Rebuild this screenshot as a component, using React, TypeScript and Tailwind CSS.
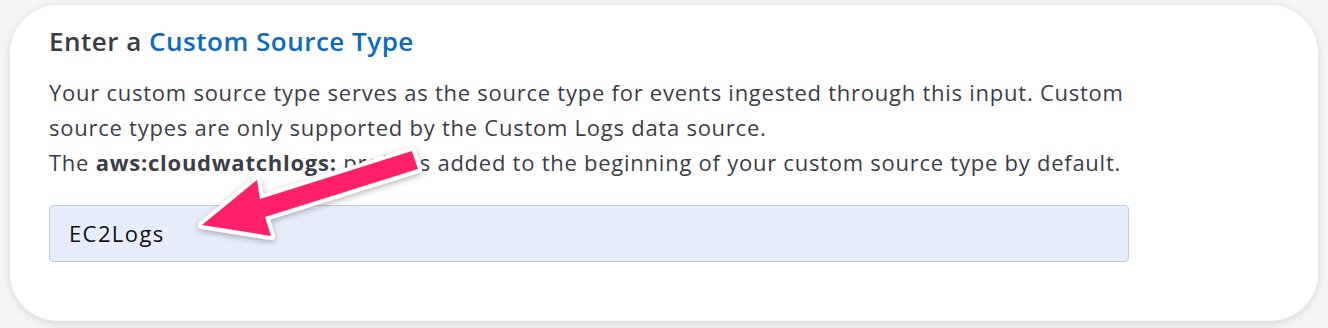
import React from "react";

export default function App() {
  return (
    <div className="w-[1328px] h-[328px] bg-[#f4f4f6] pt-[5px] px-[10px] overflow-hidden" style={{ fontFamily: "'Open Sans', Lato, sans-serif" }}>
      <div className="relative h-[316px] rounded-[48px] bg-white shadow-[0_2px_8px_rgba(0,0,0,0.12)] pl-[39px] pr-[150px] pt-[18px]">
        <h2 className="text-[26px] leading-[36px] font-semibold text-[#3a3a42] tracking-[0.5px]">
          Enter a <span className="text-[#0b6bbf]">Custom Source Type</span>
        </h2>
        <div className="mt-[16px] text-[22px] leading-[35px] text-[#3c3d46] tracking-[0.75px]">
          <p>Your custom source type serves as the source type for events ingested through this input. Custom<br />source types are only supported by the Custom Logs data source.</p>
          <p>The <span className="font-bold">aws:cloudwatchlogs:</span> prefix is added to the beginning of your custom source type by default.</p>
        </div>
        <div className="mt-[25px] h-[57px] w-[1080px] rounded-[4px] border border-[#c3cad9] bg-[#e6eefc] flex items-center pl-[19px] text-[22px] tracking-[1.4px] text-[#111]">
          EC2Logs
        </div>
        <svg className="absolute left-[-10px] top-[-5px] pointer-events-none" width="1328" height="328" viewBox="0 0 1328 328">
          <defs>
            <filter id="sh" x="-20%" y="-20%" width="140%" height="140%">
              <feDropShadow dx="0" dy="2" stdDeviation="3" floodColor="#000" floodOpacity="0.3" />
            </filter>
          </defs>
          <polygon
            points="202,225 257,180 260,199 412,151 418,169 265,217 271,236"
            fill="#ff1f6b"
            stroke="#fff"
            strokeWidth="8"
            strokeLinejoin="round"
            filter="url(#sh)"
          />
          <polygon
            points="202,225 257,180 260,199 412,151 418,169 265,217 271,236"
            fill="#ff1f6b"
            stroke="none"
          />
        </svg>
      </div>
    </div>
  );
}
